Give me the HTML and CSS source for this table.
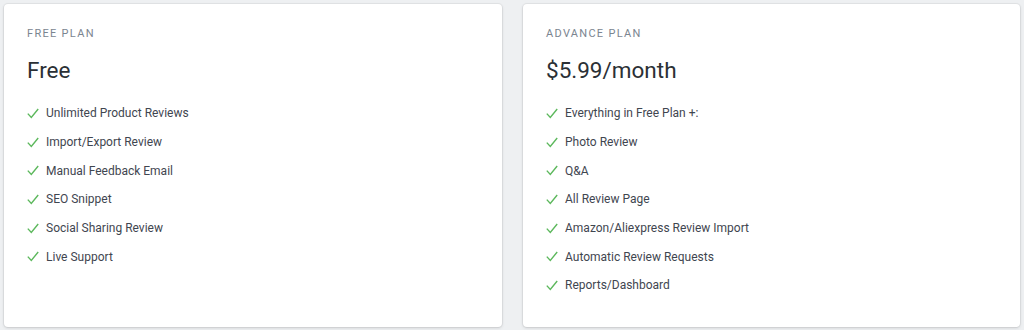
FILE: index.html
```html
<!DOCTYPE html>
<html>
<head>
<meta charset="utf-8">
<link rel="stylesheet" href="styles.css">
</head>
<body>
<div class="plans">
  <section class="card">
    <div class="label">FREE PLAN</div>
    <div class="price">Free</div>
    <ul class="features">
      <li><svg class="check" viewBox="0 0 12 11"><path d="M0.8 5.6 L4.3 9.4 L11.2 1"/></svg>Unlimited Product Reviews</li>
      <li><svg class="check" viewBox="0 0 12 11"><path d="M0.8 5.6 L4.3 9.4 L11.2 1"/></svg>Import/Export Review</li>
      <li><svg class="check" viewBox="0 0 12 11"><path d="M0.8 5.6 L4.3 9.4 L11.2 1"/></svg>Manual Feedback Email</li>
      <li><svg class="check" viewBox="0 0 12 11"><path d="M0.8 5.6 L4.3 9.4 L11.2 1"/></svg>SEO Snippet</li>
      <li><svg class="check" viewBox="0 0 12 11"><path d="M0.8 5.6 L4.3 9.4 L11.2 1"/></svg>Social Sharing Review</li>
      <li><svg class="check" viewBox="0 0 12 11"><path d="M0.8 5.6 L4.3 9.4 L11.2 1"/></svg>Live Support</li>
    </ul>
  </section>
  <section class="card">
    <div class="label">ADVANCE PLAN</div>
    <div class="price">$5.99/month</div>
    <ul class="features">
      <li><svg class="check" viewBox="0 0 12 11"><path d="M0.8 5.6 L4.3 9.4 L11.2 1"/></svg>Everything in Free Plan +:</li>
      <li><svg class="check" viewBox="0 0 12 11"><path d="M0.8 5.6 L4.3 9.4 L11.2 1"/></svg>Photo Review</li>
      <li><svg class="check" viewBox="0 0 12 11"><path d="M0.8 5.6 L4.3 9.4 L11.2 1"/></svg>Q&amp;A</li>
      <li><svg class="check" viewBox="0 0 12 11"><path d="M0.8 5.6 L4.3 9.4 L11.2 1"/></svg>All Review Page</li>
      <li><svg class="check" viewBox="0 0 12 11"><path d="M0.8 5.6 L4.3 9.4 L11.2 1"/></svg>Amazon/Aliexpress Review Import</li>
      <li><svg class="check" viewBox="0 0 12 11"><path d="M0.8 5.6 L4.3 9.4 L11.2 1"/></svg>Automatic Review Requests</li>
      <li><svg class="check" viewBox="0 0 12 11"><path d="M0.8 5.6 L4.3 9.4 L11.2 1"/></svg>Reports/Dashboard</li>
    </ul>
  </section>
</div>
</body>
</html>
```
FILE: styles.css
```css
html, body {
  margin: 0;
  padding: 0;
  background: #eef0f2;
}
body {
  font-family: Roboto, "Noto Sans", sans-serif;
  color: #212b36;
}
.plans {
  display: grid;
  grid-template-columns: 498px 497px;
  column-gap: 21px;
  padding: 4px 4px 0 4px;
  height: 330px;
  box-sizing: border-box;
}
.card {
  background: #fff;
  border-radius: 4px;
  box-shadow: 0 0 0 1px rgba(63,63,68,0.06), 0 1px 3px 0 rgba(63,63,68,0.18);
  padding: 22px 23px 21px;
  height: 323px;
  box-sizing: border-box;
}
.label {
  font-size: 11px;
  letter-spacing: 1.3px;
  color: #7b8590;
  line-height: 16px;
}
.price {
  font-size: 22.5px;
  line-height: 30px;
  margin-top: 13px;
  color: #2b3035;
}
.features {
  list-style: none;
  margin: 14px 0 0 0;
  padding: 0;
}
.features li {
  display: flex;
  align-items: center;
  font-size: 12px;
  line-height: 16px;
  height: 28.7px;
  color: #3f4650;
}
.check {
  width: 12px;
  height: 11px;
  margin-right: 7px;
  flex: none;
}
.check path {
  fill: none;
  stroke: #5cb85c;
  stroke-width: 1.4;
}
```
